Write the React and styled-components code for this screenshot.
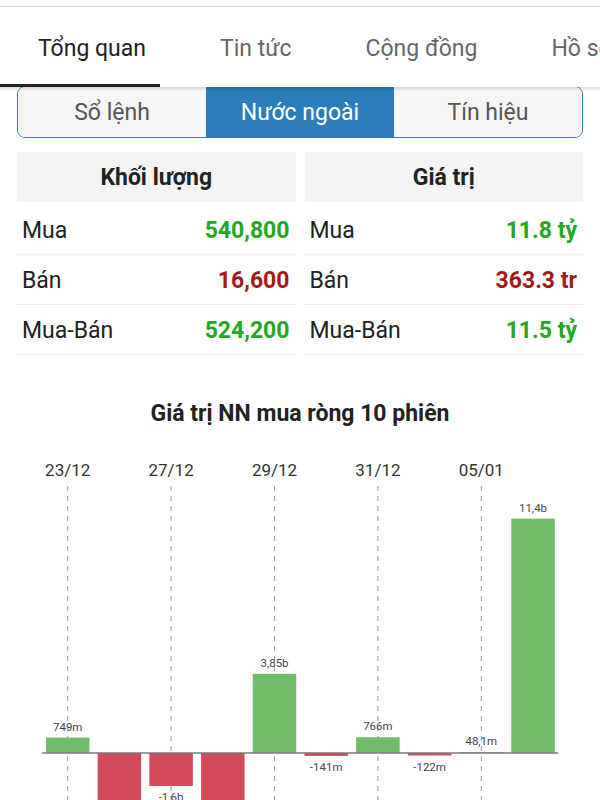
import React from "react";
import styled, { createGlobalStyle } from "styled-components";

const GlobalStyle = createGlobalStyle`
  body {
    margin: 0;
    background: #fff;
    font-family: Roboto, "Noto Sans", sans-serif;
    color: #222;
  }
`;

const Page = styled.div`
  width: 600px;
  height: 800px;
  overflow: hidden;
`;

const TopStrip = styled.div`
  height: 6px;
  border-bottom: 1px solid #e3e3e3;
`;

const TabBar = styled.div`
  position: relative;
  z-index: 2;
  display: flex;
  align-items: center;
  height: 80px;
  background: #fff;
  box-shadow: 0 2px 3px rgba(0, 0, 0, 0.14);
  overflow: hidden;
`;

const Tab = styled.div`
  position: relative;
  flex: none;
  height: 100%;
  display: flex;
  align-items: center;
  padding: 2px 36px 0 38px;
  box-sizing: border-box;
  font-size: 23px;
  white-space: nowrap;
  color: ${({ $active }) => ($active ? "#222" : "#666")};

  &::after {
    content: "";
    display: ${({ $active }) => ($active ? "block" : "none")};
    position: absolute;
    left: 0;
    bottom: 0;
    width: 160px;
    height: 3px;
    background: #222;
  }
`;

const Segmented = styled.div`
  display: grid;
  grid-template-columns: repeat(3, 1fr);
  height: 52px;
  margin: -1px 17px 0;
  border: 1.5px solid #2f7db4;
  border-radius: 8px;
  overflow: hidden;
  box-sizing: border-box;
`;

const Segment = styled.div`
  display: flex;
  align-items: center;
  justify-content: center;
  font-size: 23px;
  background: ${({ $active }) => ($active ? "#2b7dba" : "#f6f6f6")};
  color: ${({ $active }) => ($active ? "#fff" : "#555")};
`;

const Tables = styled.div`
  display: grid;
  grid-template-columns: 1fr 1fr;
  gap: 9px;
  padding: 0 17px;
  margin-top: 14px;
`;

const Column = styled.div`
  display: flex;
  flex-direction: column;
`;

const Header = styled.div`
  height: 50px;
  display: flex;
  align-items: center;
  justify-content: center;
  background: #f4f4f4;
  font-size: 23px;
  font-weight: 700;
  color: #222;
  margin-bottom: 3px;
`;

const Row = styled.div`
  height: 50px;
  display: flex;
  align-items: center;
  justify-content: space-between;
  padding: 1px 6px 0 5px;
  box-sizing: border-box;
  border-bottom: 1px solid #ececec;
  font-size: 23px;
`;

const Label = styled.span`
  color: #222;
`;

const Value = styled.span`
  font-weight: 700;
  color: ${({ $tone }) => ($tone === "up" ? "#22a823" : "#a3191c")};
`;

const ChartTitle = styled.div`
  margin-top: 46px;
  text-align: center;
  font-size: 23px;
  line-height: 26px;
  font-weight: 700;
  color: #222;
`;

const ChartBox = styled.div`
  margin-top: 14px;
  height: 360px;
`;

const stats = {
  volume: [
    ["Mua", "540,800", "up"],
    ["Bán", "16,600", "down"],
    ["Mua-Bán", "524,200", "up"],
  ],
  value: [
    ["Mua", "11.8 tỷ", "up"],
    ["Bán", "363.3 tr", "down"],
    ["Mua-Bán", "11.5 tỷ", "up"],
  ],
};

// bars 2 and 4 run past the bottom of the view, their labels too
const sessions = [
  { v: 0.749, label: "749m", date: "23/12" },
  { v: -4.6 },
  { v: -1.6, label: "-1,6b", date: "27/12" },
  { v: -4.9 },
  { v: 3.85, label: "3,85b", date: "29/12" },
  { v: -0.141, label: "-141m" },
  { v: 0.766, label: "766m", date: "31/12" },
  { v: -0.122, label: "-122m" },
  { v: 0.0481, label: "48,1m", date: "05/01" },
  { v: 11.4, label: "11,4b" },
];

const BASE = 312;
const SCALE = 20.56;
const STEP = 51.7;
const FIRST = 67.7;
const BAR_W = 43.5;

function NetChart() {
  return (
    <svg width="600" height="360" viewBox="0 0 600 360">
      {sessions.map((s, i) =>
        s.date ? (
          <g key={"d" + i}>
            <text
              x={FIRST + i * STEP}
              y={35}
              textAnchor="middle"
              fontSize="17"
              fill="#333"
              fontFamily="Roboto, sans-serif"
            >
              {s.date}
            </text>
            <line
              x1={FIRST + i * STEP}
              x2={FIRST + i * STEP}
              y1={45}
              y2={360}
              stroke="#9a9a9a"
              strokeWidth="1"
              strokeDasharray="5 5"
            />
          </g>
        ) : null
      )}
      {sessions.map((s, i) => {
        const cx = FIRST + i * STEP;
        const h = Math.max(Math.abs(s.v) * SCALE, 1);
        const up = s.v >= 0;
        const y = up ? BASE - h : BASE;
        return (
          <g key={"b" + i}>
            <rect
              x={cx - BAR_W / 2}
              y={y}
              width={BAR_W}
              height={h}
              fill={up ? "#6fbd69" : "#d34a5b"}
            />
            {s.label && (
              <text
                x={cx}
                y={up ? y - 7 : y + h + 15}
                textAnchor="middle"
                fontSize="11.5"
                fill="#444"
                fontFamily="Roboto, sans-serif"
              >
                {s.label}
              </text>
            )}
          </g>
        );
      })}
      <line x1="42" x2="558" y1={BASE} y2={BASE} stroke="#7a7a7a" strokeWidth="1.5" />
    </svg>
  );
}

export default function App() {
  return (
    <Page>
      <GlobalStyle />
      <TopStrip />
      <TabBar>
        <Tab $active>Tổng quan</Tab>
        <Tab>Tin tức</Tab>
        <Tab>Cộng đồng</Tab>
        <Tab>Hồ sơ</Tab>
      </TabBar>
      <Segmented>
        <Segment>Sổ lệnh</Segment>
        <Segment $active>Nước ngoài</Segment>
        <Segment>Tín hiệu</Segment>
      </Segmented>
      <Tables>
        <Column>
          <Header>Khối lượng</Header>
          {stats.volume.map(([l, v, t]) => (
            <Row key={l}>
              <Label>{l}</Label>
              <Value $tone={t}>{v}</Value>
            </Row>
          ))}
        </Column>
        <Column>
          <Header>Giá trị</Header>
          {stats.value.map(([l, v, t]) => (
            <Row key={l}>
              <Label>{l}</Label>
              <Value $tone={t}>{v}</Value>
            </Row>
          ))}
        </Column>
      </Tables>
      <ChartTitle>Giá trị NN mua ròng 10 phiên</ChartTitle>
      <ChartBox>
        <NetChart />
      </ChartBox>
    </Page>
  );
}
